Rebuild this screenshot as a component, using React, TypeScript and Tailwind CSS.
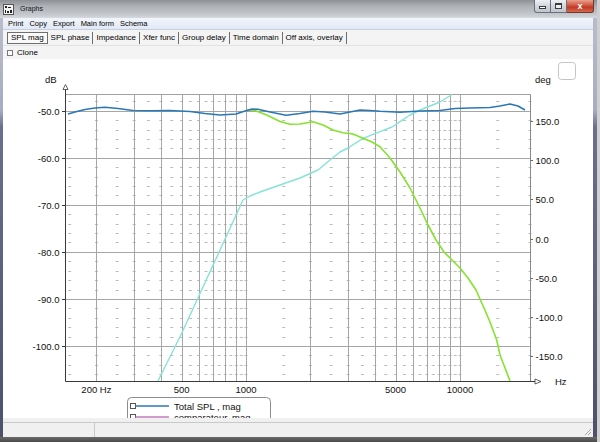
import React from "react";

const fx = (f: number) => 246 + 214 * Math.log10(f / 1000);
const fy = (db: number) => 110.7 + (-50 - db) * 4.706;
const fd = (d: number) => 238.5 - d * 0.783;
const X0 = 65.5;
const X1 = 530.5;
const YT = 94.5;
const YB = 381.5;
const r = (v: number) => Math.round(v) + 0.5;

const majors = [200, 300, 400, 500, 600, 700, 800, 900, 1000, 2000, 3000, 4000, 5000, 6000, 7000, 8000, 9000, 10000];
const mids = [150, 250, 350, 450, 550, 650, 750, 850, 950, 1500, 2500, 3500, 4500, 5500, 6500, 7500, 8500, 9500, 15000];
const minorDb: number[] = [];
for (let d = -48; d >= -106; d -= 2) if (d % 10 !== 0) minorDb.push(d);

const blue: [number, number][] = [
  [68, 114], [75, 112], [85, 109.5], [95, 108], [105, 107.3], [118, 108.5], [133, 110.5], [150, 110.7], [170, 110.5],
  [190, 111.5], [205, 113.5], [220, 115], [236, 114], [245, 111], [252, 109], [258, 109.3], [270, 112], [286, 115.3],
  [300, 113.5], [313, 111.3], [325, 112], [340, 114], [350, 112], [360, 110], [370, 110.5], [380, 111.3], [400, 112.3],
  [420, 111], [440, 110.5], [455, 108.5], [470, 108], [490, 107.5], [500, 106], [510, 104], [518, 106], [525, 110],
];
const green: [number, number][] = [
  [246, 110], [255, 110.5], [266.7, 115], [280, 121.5], [290, 124.3], [300, 124], [313, 121.7], [323, 125], [333, 130],
  [343, 132.7], [353, 134], [363, 138.3], [372, 142], [380, 146.7], [390, 158], [400, 172], [410, 188], [420, 208],
  [428, 225], [436, 240], [444, 252], [452, 260], [460, 268], [468, 278], [476, 290], [484, 308], [490, 322],
  [496.7, 340], [500, 355], [505, 368], [510, 381],
];
const cyan: [number, number][] = [
  [158, 381], [181.7, 333.3], [243, 200], [250, 196], [260, 192], [280, 185], [300, 178], [318, 170], [330, 160],
  [340, 152], [348, 148], [363, 138.3], [380, 131.7], [392, 127], [400, 121.7], [410, 115], [420, 110], [430, 106],
  [440, 102], [448, 97], [452, 94.5],
];
const pts = (a: [number, number][]) => a.map(([x, y]) => `${x},${y}`).join(" ");

function Chart() {
  const font = { fontFamily: "'Liberation Sans', Arial, sans-serif", fontSize: 9.5 };
  return (
    <svg width={590} height={359} viewBox="3 59 590 359" className="block" style={font}>
      <rect x={3} y={59} width={590} height={359} fill="#fff" />
      {/* minor dashes */}
      {[...majors, ...mids, 530].map((f) => {
        const x = f === 530 ? 530 : fx(f);
        return minorDb.map((d) => (
          <line key={`${f}-${d}`} x1={x - 1.5} x2={x + 1.5} y1={r(fy(d))} y2={r(fy(d))} stroke="#bcbcbc" strokeWidth={1} />
        ));
      })}
      {/* vertical grid */}
      {majors.map((f) => (
        <line key={f} x1={r(fx(f))} x2={r(fx(f))} y1={YT} y2={YB} stroke="#a6a6a6" strokeWidth={1} />
      ))}
      {/* horizontal grid */}
      {[-50, -60, -70, -80, -90, -100].map((d) => (
        <line key={d} x1={X0} x2={X1} y1={r(fy(d))} y2={r(fy(d))} stroke="#a6a6a6" strokeWidth={1} />
      ))}
      <line x1={X0} x2={X1} y1={YT} y2={YT} stroke="#a0a0a0" />
      <line x1={X1} x2={X1} y1={YT} y2={YB} stroke="#8a8a8a" />
      {/* axes */}
      <line x1={X0} x2={X0} y1={89} y2={YB} stroke="#3a3a3a" />
      <polygon points="63,89.5 65.5,84.5 68,89.5" fill="#fff" stroke="#3a3a3a" strokeWidth={0.8} />
      <line x1={X0} x2={535} y1={YB} y2={YB} stroke="#3a3a3a" />
      <polygon points="535,379 541,381.5 535,384" fill="#fff" stroke="#3a3a3a" strokeWidth={0.8} />
      {[-50, -60, -70, -80, -90, -100].map((d) => (
        <line key={d} x1={62} x2={X0} y1={r(fy(d))} y2={r(fy(d))} stroke="#3a3a3a" />
      ))}
      {[150, 100, 50, 0, -50, -100, -150].map((d) => (
        <line key={d} x1={X1} x2={533} y1={r(fd(d))} y2={r(fd(d))} stroke="#6a6a6a" />
      ))}
      {/* curves */}
      <polyline points={pts(cyan)} fill="none" stroke="#86e3d6" strokeWidth={1.4} strokeLinejoin="round" />
      <polyline points={pts(green)} fill="none" stroke="#84e32c" strokeWidth={1.6} strokeLinejoin="round" />
      <polyline points={pts(blue)} fill="none" stroke="#2a78b8" strokeWidth={1.6} strokeLinejoin="round" />
      {/* labels */}
      <text x={45} y={82.5} fill="#111">dB</text>
      <text x={535} y={82.5} fill="#111">deg</text>
      {[-50, -60, -70, -80, -90, -100].map((d) => (
        <text key={d} x={59.5} y={fy(d) + 4} textAnchor="end" fill="#111">
          {d.toFixed(1)}
        </text>
      ))}
      {[150, 100, 50, 0, -50, -100, -150].map((d) => (
        <text key={d} x={535.5} y={fd(d) + 4} fill="#111">
          {d.toFixed(1)}
        </text>
      ))}
      {[
        [200, "200 Hz"],
        [500, "500"],
        [1000, "1000"],
        [5000, "5000"],
        [10000, "10000"],
      ].map(([f, t]) => (
        <text key={t as string} x={fx(f as number)} y={393} textAnchor="middle" fill="#111">
          {t}
        </text>
      ))}
      <text x={555} y={385} fill="#111">Hz</text>
      {/* top right box */}
      <rect x={558.5} y={62.5} width={17} height={17} rx={3} fill="#fff" stroke="#c4c4c4" />
      {/* legend */}
      <rect x={127.5} y={397.5} width={143} height={40} rx={4} fill="#fff" stroke="#8c8c8c" />
      <rect x={130.5} y={403.5} width={5} height={5} fill="#fff" stroke="#555" />
      <line x1={135.5} x2={169} y1={406} y2={406} stroke="#2a78b8" strokeWidth={1.5} />
      <text x={174} y={410} fill="#111">Total SPL , mag</text>
      <rect x={130.5} y={414.5} width={5} height={5} fill="#fff" stroke="#555" />
      <line x1={135.5} x2={169} y1={417} y2={417} stroke="#c37bb8" strokeWidth={1.5} />
      <text x={174} y={421} fill="#111">comparateur, mag</text>
    </svg>
  );
}

const tabs = ["SPL mag", "SPL phase", "Impedance", "Xfer func", "Group delay", "Time domain", "Off axis, overlay"];
const menus = ["Print", "Copy", "Export", "Main form", "Schema"];

export default function App() {
  return (
    <div className="w-[600px] h-[442px] flex bg-[#d4d4d4] overflow-hidden font-['Liberation_Sans',Arial,sans-serif] text-black">
      <div className="w-[597px] h-full flex flex-col">
        {/* title bar */}
        <div className="h-[18px] flex items-start bg-[linear-gradient(180deg,#8d9196_0%,#aeb2b7_35%,#c4c7cb_80%,#d6dae0_100%)]">
          <svg width={11} height={11} viewBox="0 0 11 11" className="ml-[3px] mt-[4px]">
            <rect x={0.5} y={0.5} width={10} height={10} fill="#f4f4f4" stroke="#555" />
            <path d="M2 2h2v2H2zM5 3h3v1H5zM2 6h1v3H2zM4 7h2v2H4zM7 6h2v3H7z" fill="#222" />
          </svg>
          <span className="ml-[6px] mt-[5px] text-[7px] leading-[8px] text-[#111]">Graphs</span>
          <div className="ml-auto mr-[3px] flex h-[13px]">
            <div className="w-[17px] h-full rounded-bl-[3px] border border-[#6b717c] border-t-0 bg-[linear-gradient(180deg,#eef0f3_0%,#d3d7dd_50%,#c0c5cd_100%)] flex items-center justify-center">
              <div className="w-[7px] h-[3px] mt-[3px] bg-white border border-[#3c3c3c]" />
            </div>
            <div className="w-[16px] h-full border-b border-r border-[#6b717c] bg-[linear-gradient(180deg,#eef0f3_0%,#d3d7dd_50%,#c0c5cd_100%)] flex items-center justify-center">
              <div className="w-[7px] h-[6px] border border-[#3c3c3c] bg-white/60 border-t-2" />
            </div>
            <div className="w-[27px] h-full rounded-br-[3px] border-b border-r border-[#6e3a30] bg-[linear-gradient(180deg,#e8a08f_0%,#d0563f_45%,#c03a24_60%,#d6684c_100%)] flex items-center justify-center">
              <span className="text-white text-[9px] leading-[9px] font-bold">x</span>
            </div>
          </div>
        </div>
        {/* body */}
        <div className="flex-1 flex min-h-0">
          <div className="w-[3px] bg-[linear-gradient(180deg,#b8bcca_0%,#a8acc2_22%,#6b6e8e_26%,#4e516c_100%)]" />
          <div className="w-[590px] flex flex-col bg-[#f0f0f0]">
            {/* menu */}
            <div className="h-[12px] flex items-center pl-[2px] border-b border-[#c6d0e0] bg-[linear-gradient(180deg,#f2f5fb_0%,#e2e9f5_100%)] text-[7.5px] leading-[8px]">
              {menus.map((m) => (
                <span key={m} className="px-[3px]">{m}</span>
              ))}
            </div>
            {/* tabs */}
            <div className="h-[16px] flex items-center pl-[4px] border-b border-[#e2e2e2] bg-[#f4f4f4] text-[8px] leading-[9px]">
              {tabs.map((t, i) =>
                i === 0 ? (
                  <span key={t} className="h-[12px] flex items-center px-[3px] border border-[#6e6e6e] bg-[#fafafa]">{t}</span>
                ) : (
                  <span key={t} className="h-[12px] flex items-center px-[3px] border-r border-[#6e6e6e]">{t}</span>
                )
              )}
            </div>
            {/* clone */}
            <div className="h-[13px] flex items-center pl-[4px] text-[8px] leading-[9px] bg-[#f4f4f4]">
              <div className="w-[6px] h-[6px] border border-[#777] bg-white" />
              <span className="ml-[4px]">Clone</span>
            </div>
            {/* chart */}
            <div className="h-[359px] bg-white overflow-hidden">
              <Chart />
            </div>
            <div className="h-[4px] bg-[#f0f0f0]" />
            {/* status bar */}
            <div className="h-[15px] flex border-t border-[#c9c9c9] bg-[#f0f0f0]">
              <div className="w-[92px] border-r border-[#c9c9c9]" />
              <div className="flex-1 relative">
                <svg width={8} height={8} viewBox="0 0 8 8" className="absolute right-[1px] bottom-[1px]">
                  <path d="M7 1L1 7M7 4L4 7" stroke="#a8a8a8" strokeWidth={1} />
                </svg>
              </div>
            </div>
          </div>
          <div className="w-[4px] bg-[linear-gradient(180deg,#b8bcca_0%,#a8acc2_22%,#6b6e8e_26%,#4e516c_100%)]" />
        </div>
        <div className="h-[5px] bg-[linear-gradient(180deg,#6a6a6a_0%,#4a4a4a_100%)]" />
      </div>
      <div className="flex-1 bg-[#d0d0d0]" />
    </div>
  );
}
